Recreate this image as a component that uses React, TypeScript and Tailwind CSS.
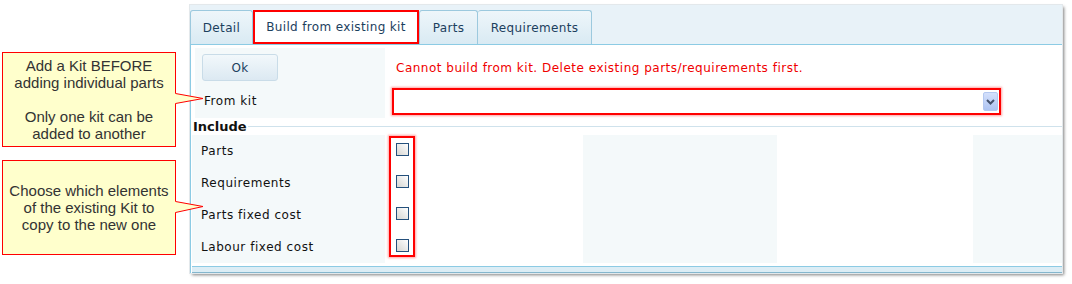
export default function App() {
  const rows = ["Parts", "Requirements", "Parts fixed cost", "Labour fixed cost"];
  return (
    <div className="w-[1072px] h-[284px] bg-white flex items-start overflow-hidden font-['DejaVu_Sans',Verdana,sans-serif] text-[12px]">
      {/* Annotation column */}
      <div className="w-[190px] shrink-0 flex flex-col relative z-10">
        <div className="relative mt-[52px] ml-[2px] w-[174px] h-[95px] border border-[#ff0000] bg-[#ffffcc] flex flex-col items-center justify-center text-[15px] leading-[17px] text-[#333333] font-['Liberation_Sans',Arial,sans-serif]">
          <span>Add a Kit BEFORE</span>
          <span>adding individual parts</span>
          <span className="h-[17px]" />
          <span>Only one kit can be</span>
          <span>added to another</span>
          <svg className="absolute left-[170px] top-[36px] w-[32px] h-[20px] overflow-visible" viewBox="0 0 32 20">
            <polygon points="0,4 30,9 0,15" fill="#ffffcc" />
            <polyline points="2.5,4.5 30,9.5 2.5,14.5" fill="none" stroke="#ff0000" strokeWidth="1" />
          </svg>
        </div>
        <div className="relative mt-[13px] ml-[2px] w-[174px] h-[95px] border border-[#ff0000] bg-[#ffffcc] flex flex-col items-center justify-center text-[15px] leading-[17px] text-[#333333] font-['Liberation_Sans',Arial,sans-serif]">
          <span>Choose which elements</span>
          <span>of the existing Kit to</span>
          <span>copy to the new one</span>
          <svg className="absolute left-[170px] top-[36px] w-[32px] h-[20px] overflow-visible" viewBox="0 0 32 20">
            <polygon points="0,4 30,9 0,16" fill="#ffffcc" />
            <polyline points="2.5,4.5 30,9.5 2.5,15.5" fill="none" stroke="#ff0000" strokeWidth="1" />
          </svg>
        </div>
      </div>

      {/* Panel */}
      <div className="mt-[5px] w-[872px] shrink-0 bg-[#e8f2f8] shadow-[0_0_0_1px_#e3e8eb,2px_2px_3px_rgba(0,0,0,0.5)]">
        {/* Tab strip */}
        <div className="h-[40px] flex items-end border-b border-[#8ccbe4] tracking-[0.35px]">
          <div className="w-[63px] h-[34px] border border-b-0 border-[#9cc9de] rounded-t-[3px] bg-gradient-to-b from-[#eef6fa] to-[#d9eaf3] flex items-center justify-center text-[#1c405e]">
            Detail
          </div>
          <div className="w-[166px] h-[34px] border-2 border-[#ff0000] bg-white flex items-center justify-center text-[#1c405e]">
            Build from existing kit
          </div>
          <div className="w-[59px] h-[34px] border border-b-0 border-[#9cc9de] rounded-t-[3px] bg-gradient-to-b from-[#eef6fa] to-[#d9eaf3] flex items-center justify-center text-[#1c405e]">
            Parts
          </div>
          <div className="w-[114px] h-[34px] border border-b-0 border-l-0 border-[#9cc9de] rounded-t-[3px] bg-gradient-to-b from-[#eef6fa] to-[#d9eaf3] flex items-center justify-center text-[#1c405e]">
            Requirements
          </div>
        </div>

        {/* Content */}
        <div className="bg-white border-l border-[#8ccbe4] pl-[1px]">
          {/* Top section */}
          <div className="flex pt-[3px] pl-[3px]">
            <div className="w-[190px] h-[70px] bg-[#f4f9fa] flex flex-col">
              <button className="mt-[6px] ml-[7px] w-[76px] h-[27px] rounded-[3px] border border-[#c9dce8] bg-gradient-to-b from-[#f2f8fb] to-[#dce9f2] text-[#1c405e] text-[12px] tracking-[0.4px] flex items-center justify-center">
                Ok
              </button>
              <div className="mt-auto h-[34px] flex items-center pl-[9px] text-[#111111] tracking-[0.55px]">From kit</div>
            </div>
            <div className="flex-1 flex flex-col pl-[7px]">
              <div className="h-[36px] pt-[4px] flex items-center pl-[4px] text-[#f00000] tracking-[0.5px]">
                Cannot build from kit. Delete existing parts/requirements first.
              </div>
              <div className="mt-[4px] w-[609px] h-[27px] border-2 border-[#ff0000] shadow-[0_0_2px_1px_rgba(255,90,90,0.55)] bg-white flex items-center justify-end pr-[1px]">
                <div className="w-[15px] h-[19px] rounded-[2px] border border-[#b4c8f0] bg-gradient-to-b from-[#d4e0fb] to-[#aec4f2] flex items-center justify-center">
                  <svg width="9" height="6" viewBox="0 0 9 6">
                    <polyline points="1,1 4.5,4.5 8,1" fill="none" stroke="#44526e" strokeWidth="2" />
                  </svg>
                </div>
              </div>
            </div>
          </div>

          {/* Include legend */}
          <div className="h-[17px] flex items-center pl-[1px]">
            <span className="font-bold text-[13px] text-[#111111] leading-[17px]">Include</span>
            <div className="flex-1 h-px bg-[#cfe2ec] ml-[1px]" />
          </div>

          {/* Grid */}
          <div className="grid grid-cols-[193px_198px_194px_196px_1fr] h-[128px]">
            <div className="bg-[#f4f9fa] flex flex-col">
              {rows.map((r) => (
                <div key={r} className="h-[32px] flex items-center pl-[9px] text-[#111111] tracking-[0.55px]">
                  {r}
                </div>
              ))}
            </div>
            <div className="relative bg-white flex flex-col">
              <div className="absolute left-[4px] top-[1px] w-[26px] h-[121px] border-2 border-[#ff0000] shadow-[0_0_2px_1px_rgba(255,90,90,0.55)]" />
              {rows.map((r) => (
                <div key={r} className="h-[32px] pt-[8px] pl-[11px]">
                  <div className="w-[13px] h-[13px] border border-[#24507c] bg-gradient-to-bl from-[#ffffff] to-[#d6d6d2]" />
                </div>
              ))}
            </div>
            <div className="bg-[#f4f9fa]" />
            <div className="bg-white" />
            <div className="bg-[#f4f9fa]" />
          </div>

          {/* Footer */}
          <div className="h-[3px] bg-white" />
          <div className="h-px bg-[#8ccbe4]" />
          <div className="h-[5px] bg-[#dcedf5]" />
          <div className="h-px bg-[#84b6cd]" />
        </div>
      </div>
    </div>
  );
}
